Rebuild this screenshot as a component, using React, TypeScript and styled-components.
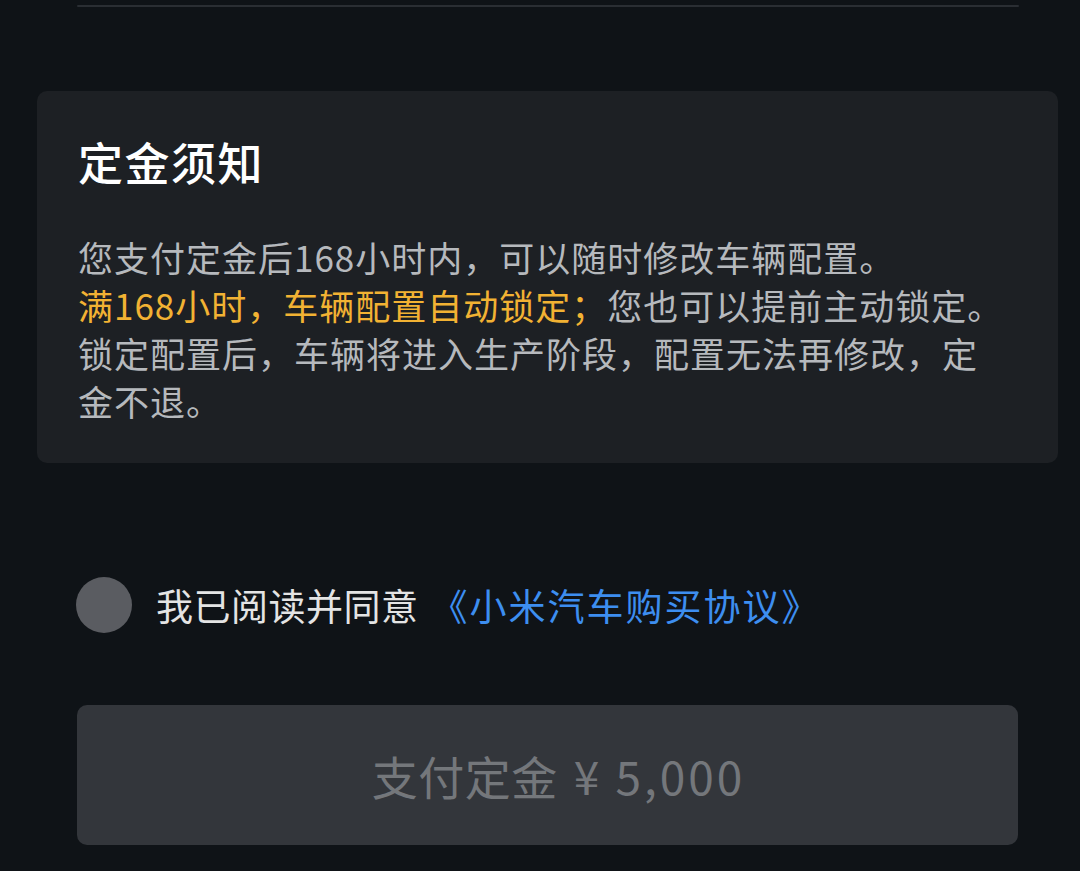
import React from "react";
import styled, { createGlobalStyle } from "styled-components";

const GlobalStyle = createGlobalStyle`
  html, body {
    margin: 0;
    padding: 0;
    background: #0f1317;
  }
  body {
    font-family: "Noto Sans CJK SC", "Noto Sans", sans-serif;
    -webkit-font-smoothing: antialiased;
  }
`;

const Page = styled.div`
  width: 1080px;
  height: 871px;
  overflow: hidden;
  background: #0f1317;
  display: flex;
  flex-direction: column;
  padding-top: 5px;
  box-sizing: border-box;
`;

const Divider = styled.div`
  height: 2px;
  margin: 0 61px 0 77px;
  background: #2a2e33;
  border-radius: 1px;
`;

const Card = styled.section`
  margin: 84px 22px 0 37px;
  padding: 41px 50px 38px 41px;
  background: #1d2024;
  border-radius: 10px;
  display: flex;
  flex-direction: column;
`;

const Title = styled.h2`
  margin: 0;
  font-size: 45px;
  line-height: 60px;
  font-weight: 500;
  color: #ffffff;
  letter-spacing: 1.5px;
`;

const Body = styled.div`
  margin-top: 41px;
  font-size: 35px;
  line-height: 48px;
  letter-spacing: 1px;
  color: #b6b9bd;
`;

const Line = styled.div``;

const Highlight = styled.span`
  color: #f2b233;
`;

const AgreeRow = styled.div`
  margin: 114px 0 0 76px;
  display: flex;
  align-items: center;
  gap: 24px;
  height: 56px;
`;

const Radio = styled.span`
  width: 56px;
  height: 56px;
  border-radius: 50%;
  background: #5a5c61;
  flex: none;
`;

const AgreeText = styled.span`
  font-size: 37px;
  line-height: 48px;
  letter-spacing: 0.5px;
  color: #e4e4e4;
`;

const Link = styled.span`
  color: #3d8ef0;
  margin-left: 12px;
  letter-spacing: 2px;
`;

const PayButton = styled.button`
  margin: 72px 0 0 77px;
  width: 941px;
  height: 140px;
  border: none;
  border-radius: 10px;
  background: #33363b;
  color: #74777b;
  font-family: "Noto Sans CJK SC", "Noto Sans", sans-serif;
  font-size: 46px;
  letter-spacing: 0.5px;
  display: flex;
  align-items: center;
  justify-content: center;
  padding: 0 0 0 22px;
  box-sizing: border-box;
`;

const Amount = styled.span`
  letter-spacing: 3px;
  margin-left: 16px;
`;

export default function App() {
  return (
    <>
      <GlobalStyle />
      <Page>
        <Divider />
        <Card>
          <Title>定金须知</Title>
          <Body>
            <Line>您支付定金后168小时内，可以随时修改车辆配置。</Line>
            <Line>
              <Highlight>满168小时，车辆配置自动锁定；</Highlight>您也可以提前主动锁定。
            </Line>
            <Line>锁定配置后，车辆将进入生产阶段，配置无法再修改，定金不退。</Line>
          </Body>
        </Card>
        <AgreeRow>
          <Radio />
          <AgreeText>
            我已阅读并同意<Link>《小米汽车购买协议》</Link>
          </AgreeText>
        </AgreeRow>
        <PayButton>
          支付定金<Amount>¥ 5,000</Amount>
        </PayButton>
      </Page>
    </>
  );
}
